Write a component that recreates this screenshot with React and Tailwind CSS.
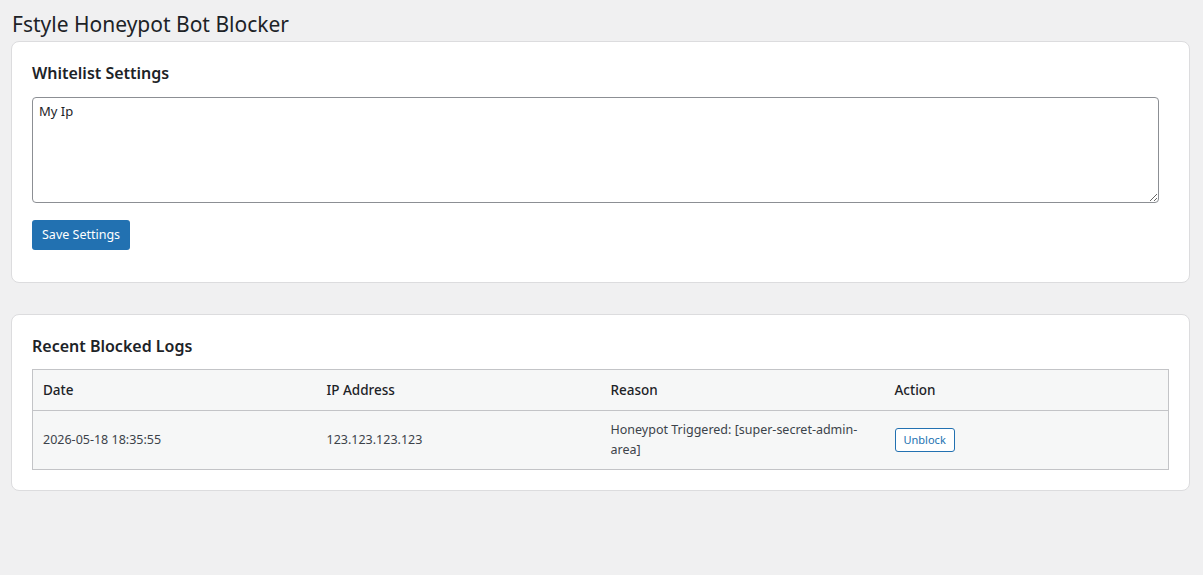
export default function App() {
  return (
    <div className="min-h-[575px] bg-[#f0f0f1] text-[#1d2327] font-['Noto_Sans',sans-serif] pl-[11px] pr-[13px]">
      <h1 className="text-[21px] leading-[24px] pt-[12px] pl-[1px] font-normal">Fstyle Honeypot Bot Blocker</h1>
      <div className="mt-[5px] bg-white border border-[#dcdcde] rounded-lg px-[20px] pt-[20px] pb-[32px]">
        <h2 className="text-[16px] leading-[22px] font-semibold">Whitelist Settings</h2>
        <textarea
          defaultValue="My Ip"
          className="mt-[13px] block w-[1127px] h-[106px] border border-[#8c8f94] rounded-[4px] px-[6px] py-[3px] text-[13px] leading-[20px] resize-y outline-none"
        />
        <button className="mt-[17px] h-[30px] px-[10px] bg-[#2271b1] text-white text-[12.5px] rounded-[3px]">Save Settings</button>
      </div>
      <div className="mt-[31px] bg-white border border-[#dcdcde] rounded-lg px-[20px] pt-[20px] pb-[20px]">
        <h2 className="text-[16px] leading-[22px] font-semibold">Recent Blocked Logs</h2>
        <table className="mt-[12px] w-full bg-[#f6f7f7] border border-[#c3c4c7] table-fixed text-left">
          <thead>
            <tr className="h-[41px] border-b border-[#c3c4c7]">
              <th className="px-[10px] text-[13.5px] font-medium">Date</th>
              <th className="px-[10px] text-[13.5px] font-medium">IP Address</th>
              <th className="px-[10px] text-[13.5px] font-medium">Reason</th>
              <th className="px-[10px] text-[13.5px] font-medium">Action</th>
            </tr>
          </thead>
          <tbody>
            <tr className="h-[59px] text-[12.5px] text-[#3c434a]">
              <td className="px-[10px]">2026-05-18 18:35:55</td>
              <td className="px-[10px]">123.123.123.123</td>
              <td className="px-[10px] leading-[20px] pr-[24px]">Honeypot Triggered: [super-secret-admin-area]</td>
              <td className="px-[10px]">
                <button className="h-[24px] px-[8px] border border-[#2271b1] text-[#2271b1] bg-white rounded-[3px] text-[11px]">Unblock</button>
              </td>
            </tr>
          </tbody>
        </table>
      </div>
    </div>
  );
}
